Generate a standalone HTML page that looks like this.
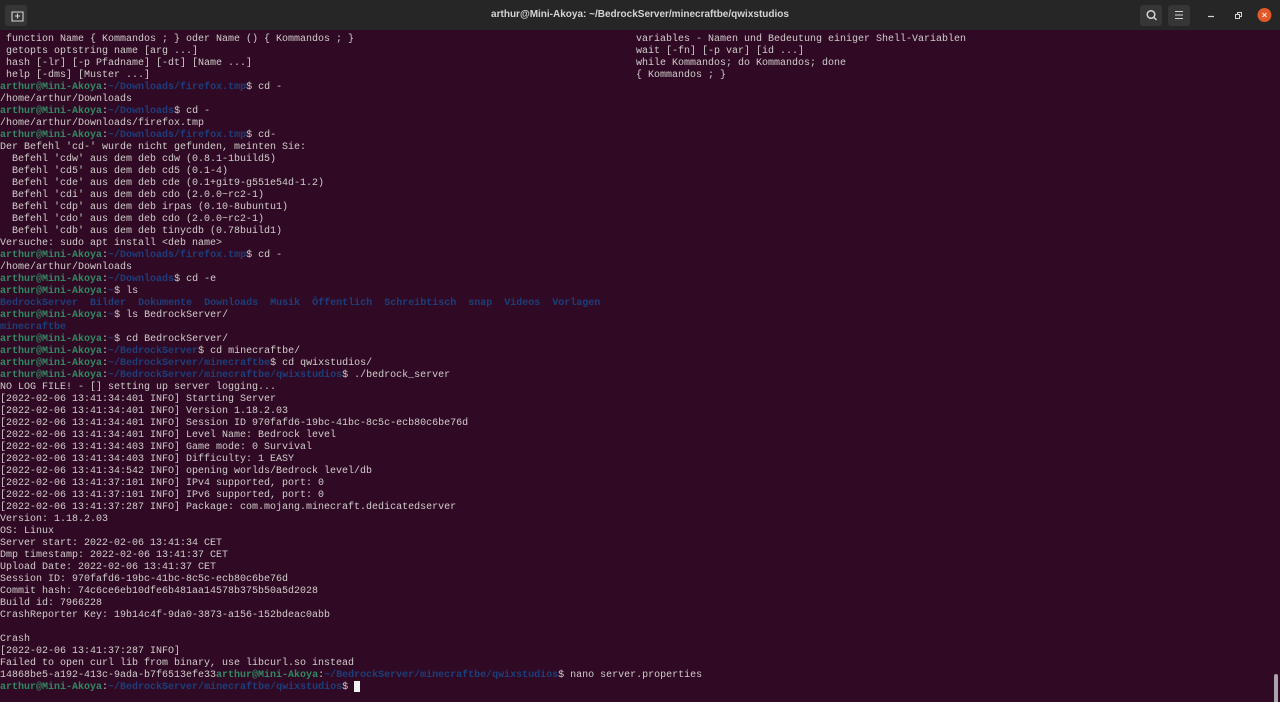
<!DOCTYPE html>
<html lang="de"><head><meta charset="utf-8"><title>arthur@Mini-Akoya</title>
<style>
html,body{margin:0;padding:0;width:1280px;height:702px;overflow:hidden;background:#300a24}
#bar{position:absolute;left:0;top:0;width:1280px;height:30px;background:#262626}
#title{position:absolute;left:0;top:0;width:1280px;text-align:center;font:bold 10px/30px "Liberation Sans",sans-serif;color:#d4d4d4;filter:blur(.3px)}
.btn{position:absolute;top:5px;width:22px;height:21px;background:#363636;border-radius:3px}
pre{position:absolute;margin:0;font:10px/12px "Liberation Mono",monospace;color:#d0cdcb;white-space:pre;filter:blur(.35px)}
b{font-weight:bold;color:#2f8a63}
i{font-style:normal;font-weight:bold;color:#1b3f7c}
#cur{position:absolute;left:354px;top:681px;width:6px;height:11px;background:#f2f2f2}
#sb{position:absolute;left:1274px;top:674px;width:4px;height:28px;background:#a9a4a8;border-radius:2px 2px 0 0}
svg{position:absolute;left:0;top:0}
</style></head><body>
<div id="bar"></div>
<div class="btn" style="left:5px"></div>
<div class="btn" style="left:1140px"></div>
<div class="btn" style="left:1168px"></div>
<div id="title">arthur@Mini-Akoya: ~/BedrockServer/minecraftbe/qwixstudios</div>
<svg width="1280" height="30" fill="none" stroke="#d4d4d4" stroke-width="1.100">
<path d="M12 12h11v9h-11zM17.500 13.500v5M15 16h5"/>
<circle cx="1151" cy="14.500" r="3.800" stroke-width="1.500"/><path d="M1154 17.500l2.500 2.500" stroke-width="1.500"/>
<path d="M1175 11.500h8M1175 15h8M1175 18.500h8"/>
<path d="M1208 16.500h6" stroke-width="1.200"/>
<path d="M1235.500 14.500h4v4h-4zM1237.500 14.500v-2h4v4h-2" stroke-width="1"/>
<circle cx="1264.500" cy="15" r="7" fill="#e1592a" stroke="none"/><path d="M1262.500 13l4 4M1266.500 13l-4 4" stroke="#f6e3dc"/>
</svg>
<pre style="left:0;top:32px;transform:translateY(2px)"> function Name { Kommandos ; } oder Name () { Kommandos ; }
 getopts optstring name [arg ...]
 hash [-lr] [-p Pfadname] [-dt] [Name ...]
 help [-dms] [Muster ...]
<b>arthur@Mini-Akoya</b>:<i>~/Downloads/firefox.tmp</i>$ cd -
/home/arthur/Downloads
<b>arthur@Mini-Akoya</b>:<i>~/Downloads</i>$ cd -
/home/arthur/Downloads/firefox.tmp
<b>arthur@Mini-Akoya</b>:<i>~/Downloads/firefox.tmp</i>$ cd-
Der Befehl 'cd-' wurde nicht gefunden, meinten Sie:
  Befehl 'cdw' aus dem deb cdw (0.8.1-1build5)
  Befehl 'cd5' aus dem deb cd5 (0.1-4)
  Befehl 'cde' aus dem deb cde (0.1+git9-g551e54d-1.2)
  Befehl 'cdi' aus dem deb cdo (2.0.0~rc2-1)
  Befehl 'cdp' aus dem deb irpas (0.10-8ubuntu1)
  Befehl 'cdo' aus dem deb cdo (2.0.0~rc2-1)
  Befehl 'cdb' aus dem deb tinycdb (0.78build1)
Versuche: sudo apt install &lt;deb name&gt;
<b>arthur@Mini-Akoya</b>:<i>~/Downloads/firefox.tmp</i>$ cd -
/home/arthur/Downloads
<b>arthur@Mini-Akoya</b>:<i>~/Downloads</i>$ cd -e
<b>arthur@Mini-Akoya</b>:<i>~</i>$ ls
<i>BedrockServer</i>  <i>Bilder</i>  <i>Dokumente</i>  <i>Downloads</i>  <i>Musik</i>  <i>Öffentlich</i>  <i>Schreibtisch</i>  <i>snap</i>  <i>Videos</i>  <i>Vorlagen</i>
<b>arthur@Mini-Akoya</b>:<i>~</i>$ ls BedrockServer/
<i>minecraftbe</i>
<b>arthur@Mini-Akoya</b>:<i>~</i>$ cd BedrockServer/
<b>arthur@Mini-Akoya</b>:<i>~/BedrockServer</i>$ cd minecraftbe/
<b>arthur@Mini-Akoya</b>:<i>~/BedrockServer/minecraftbe</i>$ cd qwixstudios/
<b>arthur@Mini-Akoya</b>:<i>~/BedrockServer/minecraftbe/qwixstudios</i>$ ./bedrock_server
NO LOG FILE! - [] setting up server logging...
[2022-02-06 13:41:34:401 INFO] Starting Server
[2022-02-06 13:41:34:401 INFO] Version 1.18.2.03
[2022-02-06 13:41:34:401 INFO] Session ID 970fafd6-19bc-41bc-8c5c-ecb80c6be76d
[2022-02-06 13:41:34:401 INFO] Level Name: Bedrock level
[2022-02-06 13:41:34:403 INFO] Game mode: 0 Survival
[2022-02-06 13:41:34:403 INFO] Difficulty: 1 EASY
[2022-02-06 13:41:34:542 INFO] opening worlds/Bedrock level/db
[2022-02-06 13:41:37:101 INFO] IPv4 supported, port: 0
[2022-02-06 13:41:37:101 INFO] IPv6 supported, port: 0
[2022-02-06 13:41:37:287 INFO] Package: com.mojang.minecraft.dedicatedserver
Version: 1.18.2.03
OS: Linux
Server start: 2022-02-06 13:41:34 CET
Dmp timestamp: 2022-02-06 13:41:37 CET
Upload Date: 2022-02-06 13:41:37 CET
Session ID: 970fafd6-19bc-41bc-8c5c-ecb80c6be76d
Commit hash: 74c6ce6eb10dfe6b481aa14578b375b50a5d2028
Build id: 7966228
CrashReporter Key: 19b14c4f-9da0-3873-a156-152bdeac0abb

Crash
[2022-02-06 13:41:37:287 INFO]
Failed to open curl lib from binary, use libcurl.so instead
14868be5-a192-413c-9ada-b7f6513efe33<b>arthur@Mini-Akoya</b>:<i>~/BedrockServer/minecraftbe/qwixstudios</i>$ nano server.properties
<b>arthur@Mini-Akoya</b>:<i>~/BedrockServer/minecraftbe/qwixstudios</i>$</pre>
<pre style="left:636px;top:34px">variables - Namen und Bedeutung einiger Shell-Variablen
wait [-fn] [-p var] [id ...]
while Kommandos; do Kommandos; done
{ Kommandos ; }</pre>
<div id="cur"></div>
<div id="sb"></div>
</body></html>
